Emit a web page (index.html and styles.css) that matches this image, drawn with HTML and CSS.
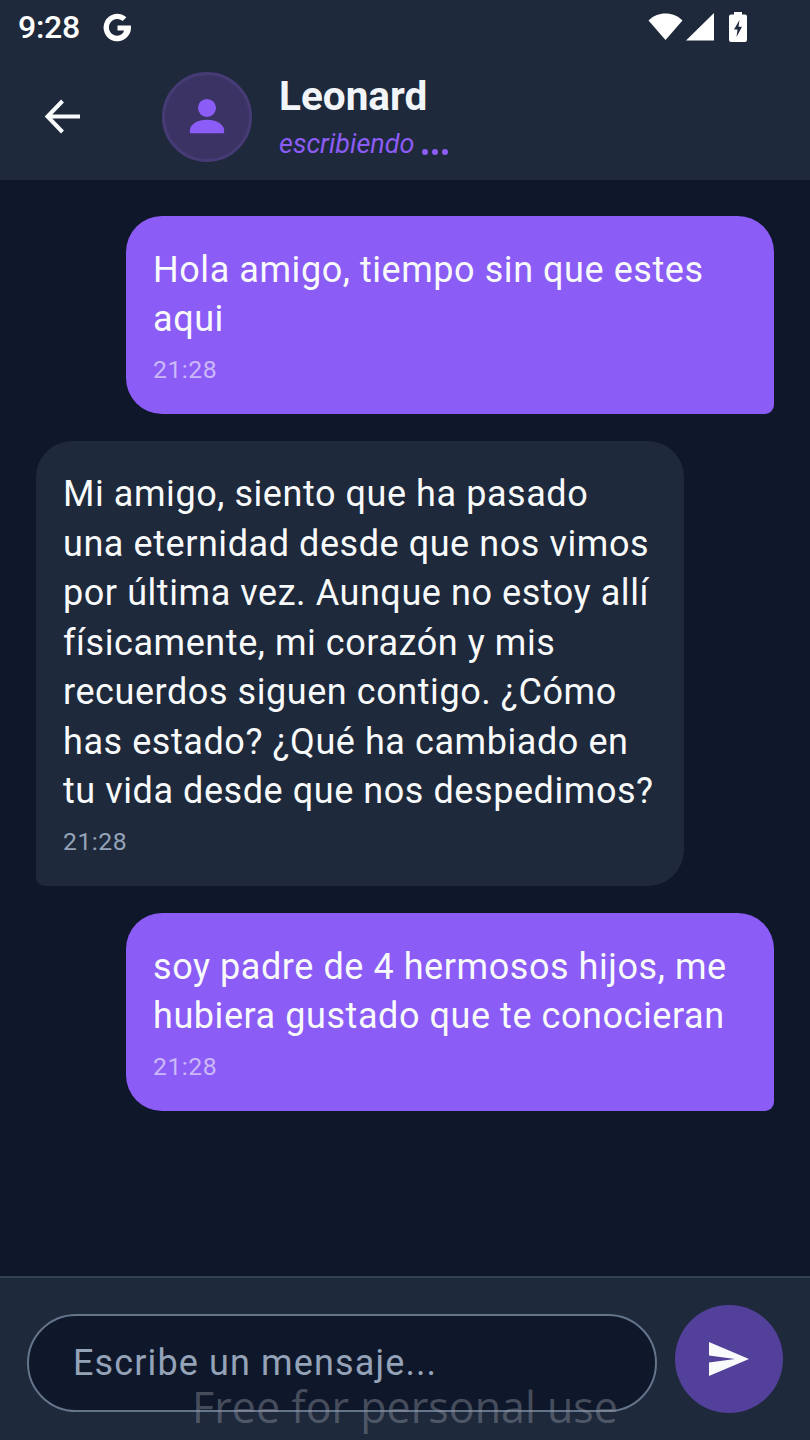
FILE: index.html
```html
<!DOCTYPE html>
<html lang="es">
<head>
<meta charset="utf-8">
<title>Chat</title>
<link rel="stylesheet" href="styles.css">
</head>
<body>
<div class="app">
  <header class="top">
    <div class="status">
      <div class="status-left">
        <span class="clock">9:28</span>
        <svg class="g-icon" viewBox="0 0 30 30"><path d="M25.500 13.200H15v4.600h6c-.8 3-3.300 4.700-6.200 4.700a7.600 7.600 0 1 1 4.900-13.400l3.400-3.400A12.500 12.500 0 1 0 27.300 15c0-.6-.1-1.200-.2-1.800z" fill="#fff"/></svg>
      </div>
      <div class="status-right">
        <svg class="wifi" viewBox="0 0 36 30"><path d="M0.500 8.500C5 4 11 1.500 17.500 1.500S30 4 34.500 8.500L17.500 28z" fill="#fff"/></svg>
        <svg class="signal" viewBox="0 0 30 30"><path d="M1 28.500L29 1v27.500z" fill="#fff"/></svg>
        <svg class="battery" viewBox="0 0 20 32"><path fill="#fff" fill-rule="evenodd" d="M6 1h8v2.500h3a2 2 0 0 1 2 2V29a2 2 0 0 1-2 2H3a2 2 0 0 1-2-2V5.500a2 2 0 0 1 2-2h3zM11.500 9L6 18.500h3.500L8.500 26 14 15.800h-3.500z"/></svg>
      </div>
    </div>
    <div class="bar">
      <svg class="back" viewBox="0 0 40 40"><path d="M37 19.500H6M19.500 4L4.500 19.500 19.500 35" fill="none" stroke="#f8fafc" stroke-width="4"/></svg>
      <div class="avatar">
        <svg class="person" viewBox="0 0 40 40"><circle cx="20" cy="10.500" r="9.500" fill="#8b5cf6"/><path d="M2 37v-3c0-6 8-11 18-11s18 5 18 11v3z" fill="#8b5cf6"/></svg>
      </div>
      <div class="who">
        <div class="name">Leonard</div>
        <div class="typing"><span>escribiendo</span><span class="dots"><i></i><i></i><i></i></span></div>
      </div>
    </div>
  </header>

  <main class="chat">
    <article class="msg mine">
      <p>Hola amigo, tiempo sin que estes aqui</p>
      <time>21:28</time>
    </article>
    <article class="msg theirs">
      <p>Mi amigo, siento que ha pasado una eternidad desde que nos vimos por última vez. Aunque no estoy allí físicamente, mi corazón y mis recuerdos siguen contigo. ¿Cómo has estado? ¿Qué ha cambiado en tu vida desde que nos despedimos?</p>
      <time>21:28</time>
    </article>
    <article class="msg mine">
      <p>soy padre de 4 hermosos hijos, me hubiera gustado que te conocieran</p>
      <time>21:28</time>
    </article>
  </main>

  <footer class="composer">
    <div class="input">Escribe un mensaje...</div>
    <button class="send" type="button" aria-label="Enviar">
      <svg viewBox="0 0 42 36"><path d="M1 1l40 17L1 35V21.500L27 18 1 14.500z" fill="#f8fafc"/></svg>
    </button>
  </footer>
  <div class="watermark">Free for personal use</div>
</div>
</body>
</html>
```
FILE: styles.css
```css
* { box-sizing: border-box; }
html, body { margin: 0; padding: 0; }
body { background: #0f172a; font-family: Roboto, "Noto Sans", sans-serif; }
.app { position: relative; width: 810px; height: 1440px; display: flex; flex-direction: column; overflow: hidden; background: #0f172a; }

.top { height: 180px; flex: none; background: #1e293b; display: flex; flex-direction: column; }
.status { height: 54px; display: flex; justify-content: space-between; align-items: center; padding: 0 62px 0 18px; }
.status-left { display: flex; align-items: center; gap: 21px; }
.clock { color: #fff; font-size: 32px; font-weight: 500; line-height: 54px; letter-spacing: -0.3px; }
.g-icon { width: 33px; height: 33px; display: block; }
.status-right { display: flex; align-items: center; gap: 1px; }
.wifi { width: 36px; height: 30px; }
.signal { width: 30px; height: 30px; }
.battery { width: 20px; height: 32px; margin-left: 12px; }

.bar { flex: 1; display: flex; align-items: center; padding: 0 0 0 43px; }
.back { width: 40px; height: 40px; flex: none; }
.avatar { width: 90px; height: 90px; margin-left: 79px; flex: none; border-radius: 50%; background: #3b3364; border: 3px solid #463b75; display: flex; align-items: center; justify-content: center; }
.person { width: 38px; height: 38px; }
.who { margin-left: 27px; margin-top: -2px; display: flex; flex-direction: column; }
.name { color: #f1f5f9; font-size: 40.500px; font-weight: 700; line-height: 48px; }
.typing { display: flex; align-items: flex-end; color: #8b5cf6; font-size: 27px; font-style: italic; line-height: 32px; margin-top: 8px; }
.dots { display: flex; gap: 4px; margin: 0 0 5px 8px; }
.dots i { display: block; width: 6px; height: 6px; border-radius: 50%; background: #8b5cf6; }

.chat { flex: 1; display: flex; flex-direction: column; gap: 26.750px; padding: 36px 36px 0; }
.msg { width: 648px; padding: 29.500px 27px 29px; color: #f8fafc; }
.msg p { margin: 0; font-size: 36px; line-height: 49.500px; letter-spacing: 0.5625px; }
.msg time { display: block; font-size: 24.750px; line-height: 30px; margin-top: 10.500px; letter-spacing: 0.5px; }
.mine { align-self: flex-end; background: #8b5cf6; border-radius: 36px 36px 9px 36px; }
.mine time { color: #cbb8fb; }
.theirs { align-self: flex-start; background: #1e293b; border-radius: 36px 36px 36px 9px; }
.theirs time { color: #94a3b8; }

.composer { height: 164px; flex: none; background: #1e293b; border-top: 2px solid #334155; display: flex; align-items: flex-start; padding: 27px 27px 0; gap: 18px; }
.input { width: 630px; height: 98px; margin-top: 9px; border-radius: 49px; background: #0f172a; border: 2px solid #64748b; padding-left: 44px; color: #94a3b8; font-size: 36px; line-height: 94px; letter-spacing: 1.125px; }
.send { width: 108px; height: 108px; flex: none; border: 0; padding: 0; border-radius: 50%; background: #52409a; display: flex; align-items: center; justify-content: center; }
.send svg { width: 42px; height: 36px; }

.watermark { position: absolute; left: 0; right: 0; top: 1379px; text-align: center; font-family: "Open Sans", sans-serif; font-size: 43px; line-height: 56px; color: rgba(150, 155, 165, 0.42); pointer-events: none; }
```
